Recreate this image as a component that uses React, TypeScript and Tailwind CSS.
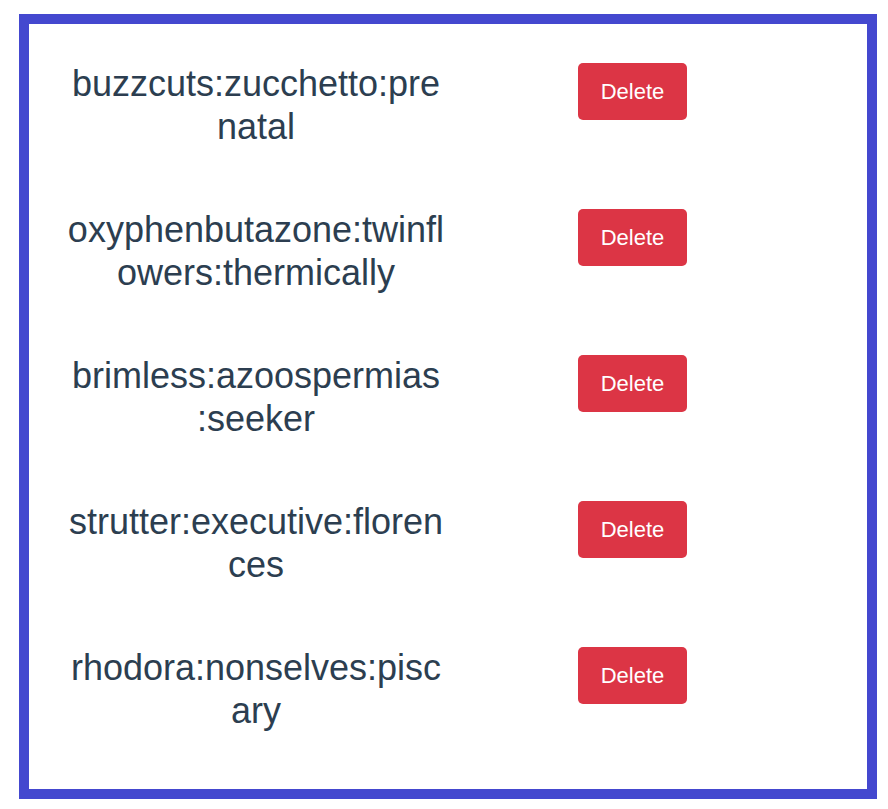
const items = [
  ["buzzcuts:zucchetto:pre", "natal"],
  ["oxyphenbutazone:twinfl", "owers:thermically"],
  ["brimless:azoospermias", ":seeker"],
  ["strutter:executive:floren", "ces"],
  ["rhodora:nonselves:pisc", "ary"],
];

export default function App() {
  return (
    <div className="min-h-[809px] bg-white pl-[19px] pt-[14px] font-['Liberation_Sans',Arial,sans-serif]">
      <div className="h-[785px] w-[858px] border-[10px] border-[#4448cf] bg-white">
        <div className="flex flex-col gap-[60px] pl-[36px] pt-[38px]">
          {items.map((lines) => (
            <div key={lines.join("")} className="grid grid-cols-[382px_371px] items-start">
              <p className="text-center text-[36px] leading-[43px] text-[#2c3e50]">
                {lines.map((line) => (
                  <span key={line} className="block whitespace-nowrap">
                    {line}
                  </span>
                ))}
              </p>
              <div className="flex justify-center pt-[1px]">
                <button
                  type="button"
                  className="h-[57px] w-[109px] rounded-[5px] bg-[#dc3545] text-[22px] text-white"
                >
                  Delete
                </button>
              </div>
            </div>
          ))}
        </div>
      </div>
    </div>
  );
}
